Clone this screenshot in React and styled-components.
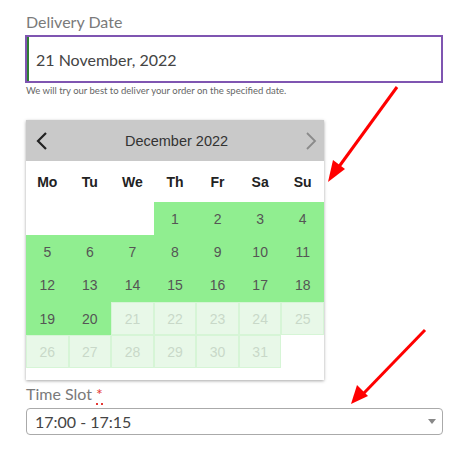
import React from "react"
import styled, { createGlobalStyle } from "styled-components"

const Global = createGlobalStyle`
  html, body { margin: 0; padding: 0; background: #fff; }
  body { font-family: "Lato", "Open Sans", sans-serif; }
`

const Page = styled.div`
  position: relative;
  width: 462px;
  height: 463px;
  padding: 12px 19px 0 25px;
  box-sizing: border-box;
  overflow: hidden;
`
const Label = styled.div`
  font-size: 16px;
  color: #7a7a7a;
  line-height: 20px;
  margin-left: 1px;
  margin-bottom: 3px;
`
const DateInput = styled.div`
  height: 48px;
  box-sizing: border-box;
  border: 2px solid #7f55b1;
  display: flex;
  align-items: center;
  font-size: 16px;
  color: #444;
  padding-left: 9px;
  box-shadow: inset 2px 0 0 #2e7d32;
`
const Help = styled.div`
  font-size: 9.5px;
  color: #666;
  margin: 2px 0 0 1px;
  line-height: 12px;
`
const Calendar = styled.div`
  width: 298px;
  margin: 23px 0 0 1px;
  background: #fff;
  box-shadow: 0 1px 3px rgba(0,0,0,0.35);
  padding-bottom: 12px;
  font-family: "Liberation Sans", Arial, sans-serif;
`
const Head = styled.div`
  height: 41px;
  background: #c9c9c9;
  display: flex;
  align-items: center;
  justify-content: space-between;
  padding: 0 6px 0 9px;
  font-size: 14.5px;
  color: #333;
`
const Nav = styled.svg`
  width: 14px;
  height: 20px;
`
const Grid = styled.div`
  display: grid;
  grid-template-columns: repeat(7, 1fr);
`
const DayName = styled.div`
  height: 41px;
  display: flex;
  align-items: center;
  justify-content: center;
  font-weight: bold;
  font-size: 14px;
  color: #222;
`
const Cell = styled.div`
  height: 33.3px;
  box-sizing: border-box;
  display: flex;
  align-items: center;
  justify-content: center;
  font-size: 14px;
  background: ${p => p.$kind === "on" ? "#90ee90" : p.$kind === "off" ? "#e8f8e8" : "transparent"};
  color: ${p => p.$kind === "off" ? "#c8d8c8" : "#555"};
  border: ${p => p.$kind === "off" ? "1px solid #d6f5d6" : "none"};
`
const SlotLabel = styled(Label)`
  margin-top: 4px;
  margin-bottom: 4px;
`
const Req = styled.abbr`
  color: #e53935;
  text-decoration: none;
  border-bottom: 2px dotted #e53935;
`
const Select = styled.div`
  height: 27px;
  box-sizing: border-box;
  margin-left: 1px;
  border: 1px solid #aaa;
  border-radius: 4px;
  display: flex;
  align-items: center;
  justify-content: space-between;
  padding: 0 6px 0 8px;
  font-size: 16px;
  color: #444;
`
const Caret = styled.span`
  width: 0;
  height: 0;
  border-left: 4px solid transparent;
  border-right: 4px solid transparent;
  border-top: 5px solid #888;
`
const Arrows = styled.svg`
  position: absolute;
  left: 0;
  top: 0;
  pointer-events: none;
`

const days = ["Mo", "Tu", "We", "Th", "Fr", "Sa", "Su"]

export default function App() {
  const cells = []
  for (let i = 0; i < 3; i++) cells.push({ n: "", k: "blank" })
  for (let d = 1; d <= 31; d++) cells.push({ n: d, k: d <= 20 ? "on" : "off" })

  return (
    <Page>
      <Global />
      <Label>Delivery Date</Label>
      <DateInput>21 November, 2022</DateInput>
      <Help>We will try our best to deliver your order on the specified date.</Help>
      <Calendar>
        <Head>
          <Nav viewBox="0 0 14 20">
            <path d="M11 2 L3 10 L11 18" fill="none" stroke="#222" strokeWidth="2.2" />
          </Nav>
          <span>December 2022</span>
          <Nav viewBox="0 0 14 20">
            <path d="M3 2 L11 10 L3 18" fill="none" stroke="#8a8a8a" strokeWidth="1.8" />
          </Nav>
        </Head>
        <Grid>
          {days.map(d => <DayName key={d}>{d}</DayName>)}
          {cells.map((c, i) => <Cell key={i} $kind={c.k}>{c.n}</Cell>)}
        </Grid>
      </Calendar>
      <SlotLabel>Time Slot <Req title="required">*</Req></SlotLabel>
      <Select>
        <span>17:00 - 17:15</span>
        <Caret />
      </Select>
      <Arrows width="462" height="463" viewBox="0 0 462 463">
        <line x1="397" y1="87" x2="338" y2="168" stroke="#f00" strokeWidth="3" />
        <polygon points="328,182 333,160 345,169" fill="#f00" />
        <line x1="425" y1="330" x2="364" y2="393" stroke="#f00" strokeWidth="3" />
        <polygon points="351,404 357,385 368,396" fill="#f00" />
      </Arrows>
    </Page>
  )
}
